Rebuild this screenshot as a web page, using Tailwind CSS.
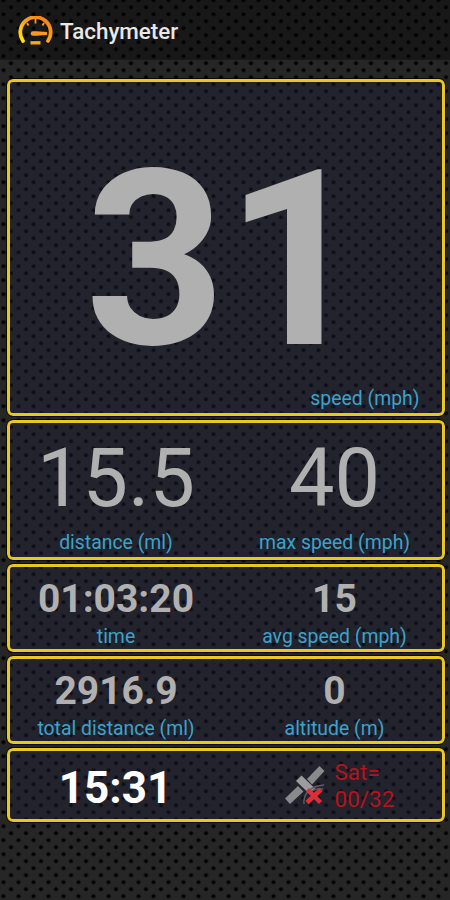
<!DOCTYPE html>
<html lang="en">
<head>
    <meta charset="UTF-8">
    <meta name="viewport" content="width=device-width, initial-scale=1.0">
    <title>Tachymeter</title>
    <script src="https://cdn.jsdelivr.net/npm/@tailwindcss/browser@4"></script>
</head>
<body class="bg-[#262626] font-['Roboto',sans-serif] text-[#b0b0b0]">
    <div class="relative isolate w-[450px] h-[900px] overflow-hidden">
        <!-- perforated texture -->
        <svg class="absolute inset-0 w-full h-full -z-10">
            <defs>
                <pattern id="holes" width="15" height="14" patternUnits="userSpaceOnUse" x="3.500" y="-0.300">
                    <circle cx="7.500" cy="7.500" r="2" fill="#000"/>
                    <circle cx="0" cy="0.500" r="2" fill="#000"/>
                    <circle cx="15" cy="0.500" r="2" fill="#000"/>
                    <circle cx="0" cy="14.500" r="2" fill="#000"/>
                    <circle cx="15" cy="14.500" r="2" fill="#000"/>
                </pattern>
            </defs>
            <rect width="450" height="900" fill="url(#holes)"/>
        </svg>

        <header class="h-[60px] bg-black/35 flex items-center pl-[18px] pt-[2px]">
            <svg class="w-[35px] h-[30px]" viewBox="0 0 35 30" fill="none">
                <defs>
                    <linearGradient id="dial" x1="0" y1="1" x2="1" y2="0">
                        <stop offset="0" stop-color="#ffe808"/>
                        <stop offset="0.45" stop-color="#fba51c"/>
                        <stop offset="1" stop-color="#f27a20"/>
                    </linearGradient>
                </defs>
                <path d="M5 25A15.200 15.200 0 1 1 30 25" stroke="url(#dial)" stroke-width="3.800" stroke-linecap="round"/>
                <path d="M17.500 3v4.500M9 7l1.500 2.500M26 7l-1.500 2.500" stroke="#f79a1e" stroke-width="1.800"/>
                <path d="M29 16l-10.500-.800h-3.500a2.300 2.300 0 0 0 0 4.600h3.500l10.500-.800z" fill="#fb9a1c"/>
                <path d="M12.500 26.800h10" stroke="#fba51c" stroke-width="3.400"/>
            </svg>
            <h1 class="ml-[7px] text-[22.4px] leading-[26px] font-medium text-[#e8e8e8]">Tachymeter</h1>
        </header>

        <main class="pt-[19px] pl-[6.5px] pr-[5.5px] flex flex-col gap-1">
            <section class="h-[337px] rounded-md border-3 border-[#eac61e] bg-[#21213c]/40 outline outline-black/70 pt-[56px]">
                <div class="text-[245px] leading-[245px] font-bold text-center">31</div>
                <div class="mt-[4px] pr-[22px] text-[19.4px] leading-6 text-right text-[#3ba3cb]">speed (mph)</div>
            </section>

            <section class="h-[140px] rounded-md border-3 border-[#eac61e] bg-[#21213c]/40 outline outline-black/70 pt-[15px] grid grid-cols-2 text-center">
                <div class="pr-[3px]">
                    <div class="text-[81px] leading-[82px]">15.5</div>
                    <div class="mt-[11px] text-[19.4px] leading-6 text-[#3ba3cb]">distance (ml)</div>
                </div>
                <div class="pl-[2px]">
                    <div class="text-[81px] leading-[82px]">40</div>
                    <div class="mt-[11px] text-[19.4px] leading-6 text-[#3ba3cb]">max speed (mph)</div>
                </div>
            </section>

            <section class="h-[88px] rounded-md border-3 border-[#eac61e] bg-[#21213c]/40 outline outline-black/70 pt-[12px] grid grid-cols-2 text-center">
                <div class="pr-[3px]">
                    <div class="text-[39px] leading-[40px] font-bold">01:03:20</div>
                    <div class="mt-[6px] text-[19.4px] leading-6 text-[#3ba3cb]">time</div>
                </div>
                <div class="pl-[2px]">
                    <div class="text-[39px] leading-[40px] font-bold">15</div>
                    <div class="mt-[6px] text-[19.4px] leading-6 text-[#3ba3cb]">avg speed (mph)</div>
                </div>
            </section>

            <section class="h-[88px] rounded-md border-3 border-[#eac61e] bg-[#21213c]/40 outline outline-black/70 pt-[12px] grid grid-cols-2 text-center">
                <div class="pr-[3px]">
                    <div class="text-[39px] leading-[40px] font-bold">2916.9</div>
                    <div class="mt-[6px] text-[19.4px] leading-6 text-[#3ba3cb]">total distance (ml)</div>
                </div>
                <div class="pl-[2px]">
                    <div class="text-[39px] leading-[40px] font-bold">0</div>
                    <div class="mt-[6px] text-[19.4px] leading-6 text-[#3ba3cb]">altitude (m)</div>
                </div>
            </section>

            <section class="h-[74px] rounded-md border-3 border-[#eac61e] bg-[#21213c]/40 outline outline-black/70 grid grid-cols-2">
                <div class="pt-[15px] pr-[4px] text-center text-[44px] leading-[44px] font-bold text-white">15:31</div>
                <div class="pl-[59px] pt-[8px] flex gap-[9px]">
                    <svg class="w-[41px] h-[42px] mt-[5px]" viewBox="0 0 41 42">
                        <path d="M0 34.500L13 22l5.500 5.500L5 40zM22 15L34.500 2l5 5L27 20.500z" fill="#8a8a8d"/>
                        <path d="M11 17l5.500-5.500 13.500 13-5.500 5.500z" fill="#9c9c9e"/>
                        <path d="M19 40c-1-9 5-18 20-19M24 30c2-4 8-6 14-5" stroke="#5c5c62" stroke-width="1.500" fill="none"/>
                        <path d="M22.500 25.500l13 13M36 25.500L22 38.500" stroke="#dc2f38" stroke-width="4.500"/>
                    </svg>
                    <div class="text-[22.5px] leading-[27px] text-[#b5141c]">Sat=<br>00/32</div>
                </div>
            </section>
        </main>
    </div>
</body>
</html>
